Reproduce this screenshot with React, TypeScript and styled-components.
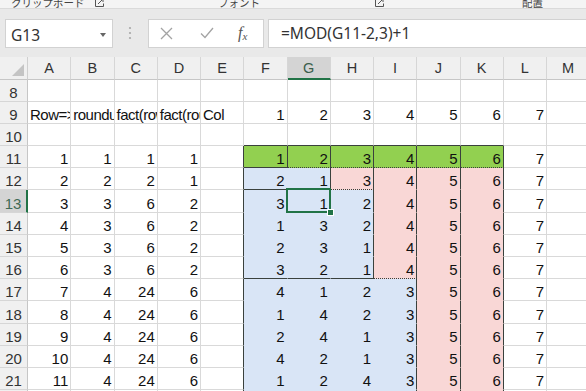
import React from "react";
import styled, { createGlobalStyle } from "styled-components";

const GlobalStyle = createGlobalStyle`
  body {
    margin: 0;
    background: #fff;
    overflow: hidden;
  }
`;

type Fill = "green" | "blue" | "pink" | null;
type Edge = "grid" | "solid" | "dotted" | "none";

const FILLS: Record<string, string> = {
  green: "#92d050",
  blue: "#d9e5f6",
  pink: "#f9d7d6",
};

const edge = (e: Edge) => {
  if (e === "solid") return "1px solid #3a413d";
  if (e === "dotted") return "1px dotted #3a413d";
  if (e === "none") return "1px solid transparent";
  return "1px solid #d9d9d9";
};

const Page = styled.div`
  width: 586px;
  height: 391px;
  overflow: hidden;
  background: #fff;
  font-family: "Liberation Sans", Arial, sans-serif;
`;

const Ribbon = styled.div`
  height: 9px;
  box-sizing: border-box;
  background: #f4f4f4;
  border-bottom: 1px solid #dadada;
  display: flex;
  align-items: flex-end;
  overflow: hidden;
`;

const RibbonGroup = styled.div<{ $w: number; $pad: number }>`
  width: ${(p) => p.$w}px;
  flex-shrink: 0;
  display: flex;
  align-items: flex-end;
  padding-left: ${(p) => p.$pad}px;
  box-sizing: border-box;
`;

const GroupLabel = styled.span`
  font-family: "Noto Sans CJK JP", sans-serif;
  font-size: 10.5px;
  line-height: 14px;
  margin-bottom: -2px;
  color: #444;
  white-space: nowrap;
`;

const Launcher = styled.svg`
  margin-left: auto;
  margin-right: 6px;
  margin-bottom: 1px;
  flex-shrink: 0;
`;

const FormulaBar = styled.div`
  height: 48px;
  box-sizing: border-box;
  background: #e9e9e9;
  display: flex;
  align-items: center;
  padding-left: 5px;
`;

const BarBox = styled.div`
  height: 29px;
  box-sizing: border-box;
  background: #fff;
  border: 1px solid #d2d2d2;
  display: flex;
  align-items: center;
  font-family: "Noto Sans", "Liberation Sans", sans-serif;
  color: #333;
`;

const NameBox = styled(BarBox)`
  width: 108px;
  padding: 0 6px 0 5px;
  justify-content: space-between;
  font-size: 15.5px;
  padding-top: 3px;
`;

const Dots = styled.svg`
  margin-left: 15px;
  flex-shrink: 0;
`;

const IconBox = styled(BarBox)`
  width: 116px;
  margin-left: 16px;
  padding-left: 11px;
`;

const IconSlot = styled.div<{ $w: number }>`
  width: ${(p) => p.$w}px;
  display: flex;
  align-items: center;
`;

const Fx = styled.span`
  font-family: "Liberation Serif", "Times New Roman", serif;
  font-style: italic;
  font-size: 16px;
  color: #555;
  sub {
    font-size: 11px;
    vertical-align: -2px;
  }
`;

const FormulaInput = styled(BarBox)`
  flex: 1;
  margin-left: 4px;
  padding-left: 12px;
  font-size: 15.5px;
  border-right: none;
`;

const Sheet = styled.div`
  display: grid;
  grid-template-columns: 28px repeat(13, 43.25px);
  grid-template-rows: 22.5px repeat(15, 22.2px);
`;

const Corner = styled.div`
  background: #f0f0f0;
  border-right: 1px solid #cfcfcf;
  border-bottom: 1px solid #c6c6c6;
  box-sizing: border-box;
  display: flex;
  align-items: flex-end;
  justify-content: flex-end;
  padding: 0 3px 3px 0;
`;

const ColHeader = styled.div<{ $active?: boolean }>`
  box-sizing: border-box;
  background: ${(p) => (p.$active ? "#d4d4d4" : "#f0f0f0")};
  border-right: 1px solid #d6d6d6;
  border-bottom: ${(p) => (p.$active ? "2px solid #217346" : "1px solid #c6c6c6")};
  display: flex;
  align-items: center;
  justify-content: center;
  font-size: 14.5px;
  color: ${(p) => (p.$active ? "#3b5e4b" : "#333")};
  padding-top: 1px;
`;

const RowHeader = styled.div<{ $active?: boolean }>`
  box-sizing: border-box;
  background: ${(p) => (p.$active ? "#d4d4d4" : "#f0f0f0")};
  border-right: ${(p) => (p.$active ? "2px solid #217346" : "1px solid #c6c6c6")};
  border-bottom: 1px solid #d6d6d6;
  display: flex;
  align-items: flex-end;
  justify-content: center;
  padding-bottom: 1px;
  font-size: 15px;
  line-height: 15px;
  color: ${(p) => (p.$active ? "#3f6a54" : "#333")};
`;

const Cell = styled.div<{ $fill: Fill; $right: Edge; $bottom: Edge; $num: boolean }>`
  position: relative;
  box-sizing: border-box;
  background: ${(p) => (p.$fill ? FILLS[p.$fill] : "#fff")};
  border-right: ${(p) => edge(p.$right)};
  border-bottom: ${(p) => edge(p.$bottom)};
  display: flex;
  align-items: flex-end;
  justify-content: ${(p) => (p.$num ? "flex-end" : "flex-start")};
  padding: ${(p) => (p.$num ? "0 2px 1px 3px" : "0 0 1px 2px")};
  letter-spacing: ${(p) => (p.$num ? "0" : "-0.5px")};
  font-size: 15px;
  line-height: 15px;
  color: #111;
  white-space: nowrap;
  overflow: ${(p) => (p.$num ? "visible" : "hidden")};
`;

const Selection = styled.div`
  position: absolute;
  left: -2px;
  top: -2px;
  right: -1px;
  bottom: -1px;
  border: 2px solid #217346;
  z-index: 2;
  pointer-events: none;
`;

const FillHandle = styled.div`
  position: absolute;
  right: -5px;
  bottom: -5px;
  width: 5px;
  height: 5px;
  background: #217346;
  border: 1px solid #fff;
`;

const COLS = ["A", "B", "C", "D", "E", "F", "G", "H", "I", "J", "K", "L", "M"];

const DATA: Record<number, (string | number | null)[]> = {
  8: [],
  9: ["Row=>", "roundup", "fact(row)", "fact(roundup)", "Col", 1, 2, 3, 4, 5, 6, 7],
  10: [],
  11: [1, 1, 1, 1, null, 1, 2, 3, 4, 5, 6, 7],
  12: [2, 2, 2, 1, null, 2, 1, 3, 4, 5, 6, 7],
  13: [3, 3, 6, 2, null, 3, 1, 2, 4, 5, 6, 7],
  14: [4, 3, 6, 2, null, 1, 3, 2, 4, 5, 6, 7],
  15: [5, 3, 6, 2, null, 2, 3, 1, 4, 5, 6, 7],
  16: [6, 3, 6, 2, null, 3, 2, 1, 4, 5, 6, 7],
  17: [7, 4, 24, 6, null, 4, 1, 2, 3, 5, 6, 7],
  18: [8, 4, 24, 6, null, 1, 4, 2, 3, 5, 6, 7],
  19: [9, 4, 24, 6, null, 2, 4, 1, 3, 5, 6, 7],
  20: [10, 4, 24, 6, null, 4, 2, 1, 3, 5, 6, 7],
  21: [11, 4, 24, 6, null, 1, 2, 4, 3, 5, 6, 7],
  22: [12, 4, 24, 6, null, 2, 1, 4, 3, 5, 6, 7],
};

const ROWS = Object.keys(DATA).map(Number);

// F..K hold the permutation blocks
const fillOf = (r: number, c: number): Fill => {
  if (c < 5 || c > 10 || r < 11) return null;
  if (r === 11) return "green";
  if (r === 12) return c <= 6 ? "blue" : "pink";
  if (r <= 16) return c <= 7 ? "blue" : "pink";
  return c <= 8 ? "blue" : "pink";
};

const rightOf = (r: number, c: number): Edge => {
  if (c === 4 && r >= 11) return "solid";
  const f = fillOf(r, c);
  if (!f) return "grid";
  if (f !== "blue" || c === 10) return "solid";
  return fillOf(r, c + 1) === "pink" ? "solid" : "none";
};

const bottomOf = (r: number, c: number): Edge => {
  if (r === 10 && c >= 5 && c <= 10) return "solid";
  const f = fillOf(r, c);
  if (!f) return "grid";
  if (f === "green") return c === 5 ? "solid" : "dotted";
  if (f === "blue" && (r === 12 || r === 16)) return "solid";
  if (f === "pink" && fillOf(r + 1, c) === "blue") return "dotted";
  return "none";
};

const GROUPS = [
  { label: "クリップボード", w: 110, pad: 11 },
  { label: "フォント", w: 280, pad: 108 },
  { label: "配置", w: 300, pad: 132 },
];

const App = () => {
  return (
    <Page>
      <GlobalStyle />
      <Ribbon>
        {GROUPS.map((g) => (
          <RibbonGroup key={g.label} $w={g.w} $pad={g.pad}>
            <GroupLabel>{g.label}</GroupLabel>
            <Launcher width="9" height="9" viewBox="0 0 9 9">
              <path d="M0.5 0.5v8h8v-3M3 6l5-5M5 1h3v3" fill="none" stroke="#555" strokeWidth="1" />
            </Launcher>
          </RibbonGroup>
        ))}
      </Ribbon>

      <FormulaBar>
        <NameBox>
          <span>G13</span>
          <svg width="6" height="4" viewBox="0 0 6 4">
            <path d="M0 0h6L3 4z" fill="#666" />
          </svg>
        </NameBox>
        <Dots width="4" height="14" viewBox="0 0 4 14">
          <circle cx="2" cy="2" r="1.1" fill="#a8a8a8" />
          <circle cx="2" cy="7" r="1.1" fill="#a8a8a8" />
          <circle cx="2" cy="12" r="1.1" fill="#a8a8a8" />
        </Dots>
        <IconBox>
          <IconSlot $w={40}>
            <svg width="13" height="13" viewBox="0 0 13 13">
              <path d="M1 1l11 11M12 1L1 12" stroke="#a3a3a3" strokeWidth="1.3" />
            </svg>
          </IconSlot>
          <IconSlot $w={38}>
            <svg width="14" height="12" viewBox="0 0 14 12">
              <path d="M1 6.5l4 4L13 1" fill="none" stroke="#a3a3a3" strokeWidth="1.3" />
            </svg>
          </IconSlot>
          <IconSlot $w={20}>
            <Fx>
              f<sub>x</sub>
            </Fx>
          </IconSlot>
        </IconBox>
        <FormulaInput>=MOD(G11-2,3)+1</FormulaInput>
      </FormulaBar>

      <Sheet>
        <Corner>
          <svg width="12" height="12" viewBox="0 0 12 12">
            <path d="M12 0v12H0z" fill="#c4c4c4" />
          </svg>
        </Corner>
        {COLS.map((c) => (
          <ColHeader key={c} $active={c === "G"}>
            {c}
          </ColHeader>
        ))}
        {ROWS.map((r) => (
          <React.Fragment key={r}>
            <RowHeader $active={r === 13}>{r}</RowHeader>
            {COLS.map((_, c) => {
              const v = DATA[r][c] ?? null;
              const isSel = r === 13 && c === 6;
              return (
                <Cell
                  key={c}
                  $fill={fillOf(r, c)}
                  $right={rightOf(r, c)}
                  $bottom={bottomOf(r, c)}
                  $num={typeof v === "number"}
                >
                  {v}
                  {isSel && (
                    <Selection>
                      <FillHandle />
                    </Selection>
                  )}
                </Cell>
              );
            })}
          </React.Fragment>
        ))}
      </Sheet>
    </Page>
  );
};

export default App;
